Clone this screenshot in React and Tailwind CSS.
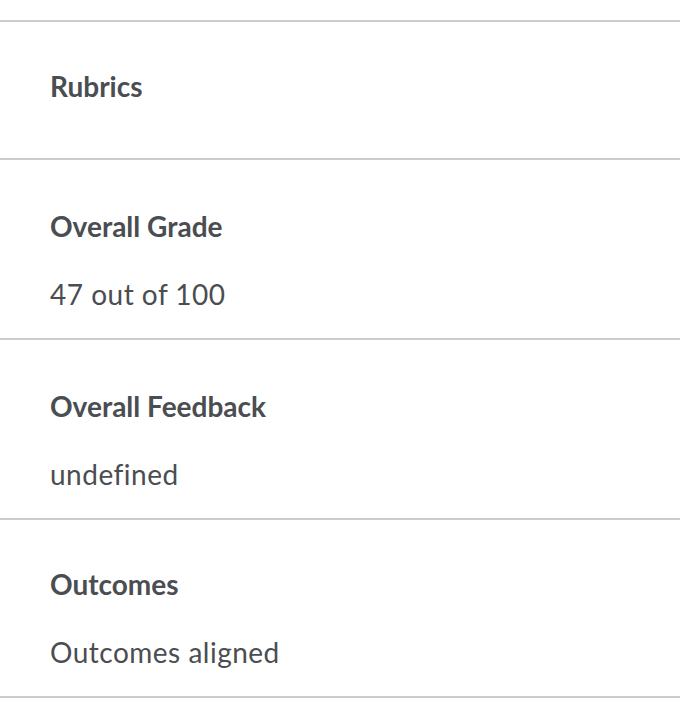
const sections = [
  { title: 'Rubrics' },
  { title: 'Overall Grade', value: '47 out of 100' },
  { title: 'Overall Feedback', value: 'undefined' },
  { title: 'Outcomes', value: 'Outcomes aligned', last: true },
];

export default function App() {
  return (
    <div className="w-[680px] h-[718px] bg-white overflow-hidden pt-5 text-[#4a4d51] font-['Lato','Open_Sans',sans-serif]">
      <div className="border-t-2 border-[#c7cdd1]">
        {sections.map((s) =>
          s.value ? (
            <div
              key={s.title}
              className={`${s.last ? 'h-[178px] pt-[43px]' : 'h-[180px] pt-[45px]'} border-b-2 border-[#c7cdd1] px-[50px]`}
            >
              <h3 className="text-[28px] leading-[42px] font-bold">{s.title}</h3>
              <p className="mt-[26px] text-[28px] leading-[42px] tracking-[0.5px]">{s.value}</p>
            </div>
          ) : (
            <div key={s.title} className="h-[138px] border-b-2 border-[#c7cdd1] px-[50px] pt-[43px]">
              <h3 className="text-[28px] leading-[42px] font-bold">{s.title}</h3>
            </div>
          )
        )}
      </div>
    </div>
  );
}
